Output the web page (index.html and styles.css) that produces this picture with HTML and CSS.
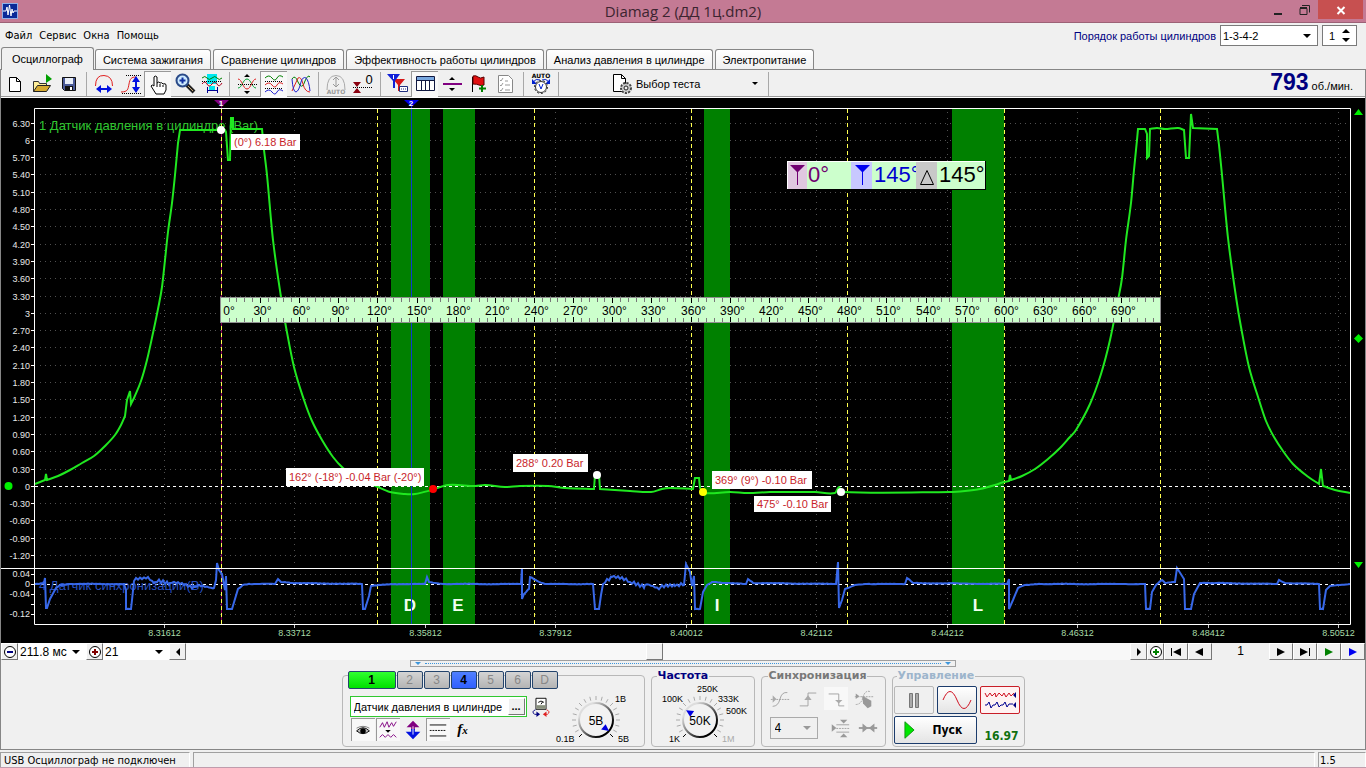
FILE: index.html
```html
<!DOCTYPE html>
<html lang="ru">
<head>
<meta charset="utf-8">
<title>Diamag 2 (ДД 1ц.dm2)</title>
<link rel="stylesheet" href="styles.css">
</head>
<body>
<header class="titlebar">
  <svg class="app-icon" viewBox="0 0 16 16"><rect width="16" height="16" fill="#8fb0e8"/><rect x="1" y="1" width="14" height="14" fill="#0a2a98"/><path d="M1 8h3l1-4 1 8 1.500-10 1.500 11 1-7 1 4 1-2h3" fill="none" stroke="#fff"/></svg>
  <h1 class="title">Diamag 2 (ДД 1ц.dm2)</h1>
  <div class="window-buttons">
    <button aria-label="Свернуть"><svg viewBox="0 0 12 12"><path d="M1 10h8" stroke="#222" stroke-width="2"/></svg></button>
    <button aria-label="Развернуть"><svg viewBox="0 0 12 12"><path d="M1 4.500h7v6h-7zM1 3.500h7M3 1.500h7.500v7" fill="none" stroke="#222"/></svg></button>
    <button class="close" aria-label="Закрыть"><svg viewBox="0 0 12 12"><path d="M2.500 3l7 7M9.500 3l-7 7" stroke="#fff" stroke-width="2"/></svg></button>
  </div>
</header>

<div class="topbar">
  <nav class="menu">
    <button>Файл</button><button>Сервис</button><button>Окна</button><button>Помощь</button>
  </nav>
  <div class="order">
    <label for="order">Порядок работы цилиндров</label>
    <span class="combo boxed order-combo"><select id="order"><option>1-3-4-2</option></select></span>
    <span class="spinner"><input type="text" value="1" aria-label="Цилиндр"><i class="up"></i><i class="down"></i></span>
  </div>
</div>

<nav class="tabs" role="tablist">
  <button role="tab" class="active" aria-selected="true">Осциллограф</button>
  <button role="tab">Система зажигания</button>
  <button role="tab">Сравнение цилиндров</button>
  <button role="tab">Эффективность работы цилиндров</button>
  <button role="tab">Анализ давления в цилиндре</button>
  <button role="tab">Электропитание</button>
</nav>

<main class="page">
<div class="toolbar">
  <button aria-label="Новый"><svg viewBox="0 0 24 24"><path d="M6.500 5.500h7l4 4v10h-11z" fill="#fff" stroke="#000"/><path d="M13.500 5.500v4h4" fill="none" stroke="#000"/></svg></button>
  <button aria-label="Открыть"><svg viewBox="0 0 24 24"><path d="M3.500 19.500v-10h5l1 2h7v3" fill="#ffef9a" stroke="#333"/><path d="M3.500 19.500l4-6h13l-4 6z" fill="#d6aa30" stroke="#222"/><path d="M16 2l6 5-6 4z" fill="#00a000"/></svg></button>
  <button aria-label="Сохранить"><svg viewBox="0 0 24 24"><path d="M5.500 5.500h13v13h-11l-2-2z" fill="#4a5a98" stroke="#111"/><path d="M8 6h8v6H8z" fill="#e8eef8"/><path d="M8 14h8v4H8z" fill="#111"/><path d="M13 15h2v3h-2z" fill="#fff"/></svg></button>
  <span class="sep"></span>
  <button aria-label="Период"><svg viewBox="0 0 24 24"><path d="M3.500 14q0-11 8.500-10.500t8.500 10.500" fill="none" stroke="#e02020"/><path d="M6 17h12" stroke="#0010e0" stroke-width="2"/><path d="M4 17l5-4v8zM20 17l-5-4v8z" fill="#0010e0"/></svg></button>
  <button aria-label="Амплитуда"><svg viewBox="0 0 24 24"><path d="M2 20c7 0 7-3 8-8s2-7 7-7" fill="none" stroke="#e02020"/><path d="M7 3.500h15M3 21.500h19" stroke="#000" stroke-dasharray="1 1"/><path d="M17 7v11" stroke="#0010e0" stroke-width="2"/><path d="M17 4l4 6h-8zM17 21l4-6h-8z" fill="#0010e0"/></svg></button>
  <button class="pressed" aria-label="Рука"><svg viewBox="0 0 24 24"><path d="M8 14V5q1-2 3 0v6q2-2 3 0 2-1 3 1 3-1 3 1v5l-2 4h-8l-5-8q1-2 3 0z" fill="#fff" stroke="#000"/><path d="M11 11v4M14 12v3M17 13v2" stroke="#000"/></svg></button>
  <button aria-label="Масштаб"><svg viewBox="0 0 24 24"><path d="M14 13l7 7" stroke="#222" stroke-width="4"/><path d="M15 14l5 5" stroke="#c8a878"/><circle cx="9.500" cy="8.500" r="6" fill="#cdeaff" stroke="#2a4a88" stroke-width="2"/><path d="M9.500 5.500v6M6.500 8.500h6" stroke="#1030a0" stroke-width="2"/></svg></button>
  <button aria-label="Фрагмент"><svg viewBox="0 0 24 24"><path d="M7 2h10v10H7zM9 14h6v4H9z" fill="#00e8f0"/><path d="M2 6q3-3 5 0t5 0 5 0 5 0" fill="none" stroke="#008000"/><path d="M2 12q3-4 5 0t5 0 5 0 5-1" fill="none" stroke="#b00020"/><path d="M2 9.500h20" stroke="#000" stroke-dasharray="1 1"/><path d="M7.500 15v6M17.500 15v6M8 18.500h9" stroke="#000090"/></svg></button>
  <span class="sep"></span>
  <button aria-label="Совместить"><svg viewBox="0 0 24 24"><path d="M3 16c4 0 5-9 9-9s5 9 9 9" fill="none" stroke="#00a030"/><path d="M3 7c4 0 5 10 9 10s5-10 9-10" fill="none" stroke="#e02020"/><path d="M3 12.500h19" stroke="#000" stroke-dasharray="1 1"/><path d="M9 5h6l-3-3zM9 19h6l-3 3z" fill="#000"/></svg></button>
  <button class="pressed" aria-label="Разнести"><svg viewBox="0 0 24 24"><path d="M3 6q4-4 7 0t5 0 6-1" fill="none" stroke="#008000"/><path d="M3 13q4-4 7 0t5 0 6-1" fill="none" stroke="#e02020"/><path d="M3 20q4-4 7 0t5 0 6-1" fill="none" stroke="#2020d0"/><path d="M3 9.500h18M3 16.500h18" stroke="#000" stroke-dasharray="1 1"/></svg></button>
  <button aria-label="Наложить"><svg viewBox="0 0 24 24"><path d="M3 7q3-5 6 3 4 9 7-1 3-7 5-4" fill="none" stroke="#008000"/><path d="M3 19L9 6q3-2 5 6t7 8" fill="none" stroke="#e02020"/><path d="M3 7q1 13 4 13 3-1 5-10 2-6 5-4 3 3 4 13" fill="none" stroke="#2020d0"/></svg></button>
  <span class="sep"></span>
  <button aria-label="Авто"><svg viewBox="0 0 24 24"><path d="M3 18Q3 3.500 12 3.500t9 14.500" fill="none" stroke="#aaa"/><path d="M12 5v10M9 8l3-3 3 3M9 12l3 3 3-3" fill="none" stroke="#999"/><text x="12" y="22" class="tiny dim">AUTO</text></svg></button>
  <button aria-label="Ноль"><svg viewBox="0 0 24 24"><path d="M2 10h8l-4 5zM2 21h8l-4-5z" fill="#8a0010"/><path d="M2 15.500h20" stroke="#000" stroke-dasharray="1 1"/><text x="18" y="12" class="zero">0</text></svg></button>
  <span class="sep"></span>
  <button aria-label="Курсоры"><svg viewBox="0 0 24 24"><path d="M7 7h12l-5 6v6h-2v-6z" fill="#d81818"/><path d="M1 2h13l-5 7v7H7V9z" fill="#1020d8"/><path d="M7.500 3v4" stroke="#fff"/><path d="M13.500 14.500h8v5h-8z" fill="#fff" stroke="#203080"/><path d="M15 17h5" stroke="#203080" stroke-dasharray="1 1"/></svg></button>
  <button class="pressed" aria-label="Таблица"><svg viewBox="0 0 24 24"><path d="M3.500 4.500h18v14h-18z" fill="#fff" stroke="#101840"/><path d="M4 5h17v3H4z" fill="#78a8e0"/><path d="M4 8.500h17M8.500 8v10M12.500 8v10M16.500 8v10" stroke="#101840"/></svg></button>
  <button aria-label="Делитель"><svg viewBox="0 0 24 24"><path d="M3 12h19" stroke="#800080" stroke-width="2"/><path d="M9 8h6l-3-3zM9 16h6l-3 3z" fill="#000"/></svg></button>
  <button aria-label="Метка"><svg viewBox="0 0 24 24"><path d="M5.500 5v15" stroke="#000"/><path d="M6 4q3-1 5 1t6 0v8q-3 1-5 0t-6-1z" fill="#e01010" stroke="#500"/><path d="M15 13v7M12 16.500h7" stroke="#008000" stroke-width="2"/></svg></button>
  <button aria-label="Список"><svg viewBox="0 0 24 24"><path d="M4.500 3.500h10l4 4v13h-14z" fill="#fff" stroke="#888"/><path d="M6 8l1 1 2-3M6 13l1 1 2-3M6 18l1 1 2-3M11 9h3M11 13h5M11 18h5" fill="none" stroke="#999"/></svg></button>
  <span class="sep"></span>
  <button aria-label="Автонастройка"><svg viewBox="0 0 24 24"><text x="12" y="6" class="tiny">AUTO</text><path d="M4 10q3-4 7-2M20 10q-3-4-7-2" fill="none" stroke="#0020d0"/><path d="M3 7v5h5zM21 7v5h-5z" fill="#0020d0"/><circle cx="12" cy="15" r="5.500" fill="#fff" stroke="#333"/><circle cx="12" cy="15" r="6.500" fill="none" stroke="#333" stroke-dasharray="2 2"/><path d="M10 12l2 5 2-5" fill="none" stroke="#0020d0"/></svg></button>
  <span class="sep"></span>
  <button class="test-choice"><svg viewBox="0 0 24 24"><path d="M3.500 2.500h8l4 4v13h-12z" fill="#fff" stroke="#000"/><path d="M11.500 2.500v4h4" fill="none" stroke="#000"/><circle cx="16" cy="16" r="4.500" fill="#ccc" stroke="#444" stroke-width="3" stroke-dasharray="2 1"/><circle cx="16" cy="16" r="4" fill="#ccc"/><circle cx="16" cy="16" r="2" fill="#eee" stroke="#222"/></svg><span>Выбор теста</span><i class="arrow"></i></button>
  <span class="sep"></span>
  <output class="rpm"><b>793</b> об./мин.</output>
</div>

<svg class="chart" id="chart" viewBox="1 98 1364 545" role="img" aria-label="Осциллограмма"></svg>

<div class="scrollbar-row">
  <button class="sq" aria-label="Уменьшить"><svg viewBox="0 0 16 16"><circle cx="8" cy="8" r="5.500" fill="#fff" stroke="#000"/><path d="M5 8h6" stroke="#000080" stroke-width="2"/></svg></button>
  <span class="combo span-combo"><select aria-label="Развёртка"><option>211.8 мс</option></select></span>
  <button class="sq" aria-label="Увеличить"><svg viewBox="0 0 16 16"><circle cx="8" cy="8" r="5.500" fill="#fff" stroke="#000"/><path d="M5 8h6M8 5v6" stroke="#800000" stroke-width="2"/></svg></button>
  <span class="combo scale-combo"><select aria-label="Масштаб"><option>21</option></select></span>
  <button class="sq" aria-label="Влево"><svg viewBox="0 0 16 16"><path d="M10 4v8L6 8z"/></svg></button>
  <input class="track" type="range" min="0" max="1000" value="496" aria-label="Прокрутка">
  <button class="sq" aria-label="Вправо"><svg viewBox="0 0 16 16"><path d="M6 4v8l4-4z"/></svg></button>
  <button class="sq" aria-label="Добавить"><svg viewBox="0 0 16 16"><circle cx="8" cy="8" r="5.500" fill="#fff" stroke="#000"/><path d="M5 8h6M8 5v6" stroke="#008000" stroke-width="2"/></svg></button>
  <button class="nav" aria-label="В начало"><svg viewBox="0 0 16 16"><path d="M3 4h1v8H3zM13 4v8L5 8z"/></svg></button>
  <button class="nav" aria-label="Назад"><svg viewBox="0 0 16 16"><path d="M11 4v8L3 8z"/></svg></button>
  <output class="frame-no">1</output>
  <button class="nav" aria-label="Вперёд"><svg viewBox="0 0 16 16"><path d="M4 4v8l8-4z"/></svg></button>
  <button class="nav" aria-label="В конец"><svg viewBox="0 0 16 16"><path d="M12 4h1v8h-1zM3 4v8l8-4z"/></svg></button>
  <button class="nav" aria-label="Воспроизвести"><svg viewBox="0 0 16 16"><path d="M4 4v8l8-4z" fill="#008000"/></svg></button>
  <button class="nav" aria-label="Быстро"><svg viewBox="0 0 16 16"><path d="M4 4v8l8-4z" fill="#0000f0"/></svg></button>
</div>

<div class="splitter"><i></i><span></span><i></i></div>

<div class="panel">
  <fieldset class="group channel">
    <div class="channel-main">
      <div class="channels">
        <button class="ch on1">1</button><button class="ch">2</button><button class="ch">3</button><button class="ch on4">4</button><button class="ch">5</button><button class="ch">6</button><button class="ch">D</button>
      </div>
      <div class="sensor-row">
        <span class="sensor"><input type="text" value="Датчик давления в цилиндре" aria-label="Датчик"><button aria-label="Выбрать">...</button></span>
        <button class="flat" aria-label="Перевернуть"><svg viewBox="0 0 24 24"><path d="M6.500 2.500h11v12h-11z" fill="#fff" stroke="#000"/><path d="M7 10h10v4H7z" fill="#88907c"/><path d="M9 7q3-3 6 0M12 9l2-3" fill="none" stroke="#000"/><path d="M6 15q-5 2-1 5h3" fill="none" stroke="#000080"/><path d="M7 17l4 3-4 3z" fill="#000080"/><path d="M18 15q5 2 1 5h-2" fill="none" stroke="#e02020"/><path d="M18 17v6l-4-3z" fill="#e02020"/></svg></button>
      </div>
      <div class="view-row">
        <button class="flat pressed" aria-label="Показать"><svg viewBox="0 0 24 24"><path d="M5 13q7-7 14 0-7 6-14 0z" fill="#bbb" stroke="#000"/><circle cx="12" cy="13" r="3" fill="#000"/><path d="M5 10q7-4 14 0" fill="none" stroke="#777"/></svg></button>
        <button class="flat pressed" aria-label="Фильтр"><svg viewBox="0 0 24 24"><path d="M3 9l3-5 2 5 3-6 2 6 3-5 2 4 3-5M3 20l3-3 3 3 3-3 3 3 3-3 3 3" fill="none" stroke="#800080"/><path d="M9 12h6l-3 3z"/></svg></button>
        <button class="flat" aria-label="Сдвиг"><svg viewBox="0 0 24 24"><path d="M12 2l7 7h-5v3h-4V9H5z" fill="#800080"/><path d="M12 22l8-8h-6v-3h-4v3H4z" fill="#0010e0"/><path d="M12 8v9" stroke="#fff"/></svg></button>
        <button class="flat pressed" aria-label="Уровни"><svg viewBox="0 0 24 24"><path d="M3 6.500h18M3 18.500h18" stroke="#000"/><path d="M3 12.500h18" stroke="#000" stroke-dasharray="2 1"/></svg></button>
        <button class="flat fx" aria-label="Функция"><i>f</i><small>x</small></button>
      </div>
    </div>
    <svg class="knob" id="volts" viewBox="555 688 85 56"></svg>
  </fieldset>

  <fieldset class="group freq">
    <legend>Частота</legend>
    <svg class="knob" id="freq" viewBox="654 684 96 60"></svg>
  </fieldset>

  <fieldset class="group sync">
    <legend>Синхронизация</legend>
    <div class="sync-row">
      <button class="flat" aria-label="По уровню"><svg viewBox="0 0 24 24"><path d="M4 20q6 0 8-8t8-7" class="gr"/><path d="M2 12.500h20" class="gr" stroke-dasharray="2 1"/><path d="M4 8v8l4-4z" fill="#aaa"/></svg></button>
      <button class="flat" aria-label="По фронту"><svg viewBox="0 0 24 24"><path d="M3 19.500h9v-14h9" class="gr"/><path d="M8 13l4-5 4 5z" fill="#aaa"/></svg></button>
      <button class="flat lit" aria-label="По спаду"><svg viewBox="0 0 24 24"><path d="M4 6.500h11v13h6" class="gr"/><path d="M11 13l4 4 4-4z" fill="#aaa"/></svg></button>
      <button class="flat" aria-label="Вручную"><svg viewBox="0 0 24 24"><path d="M3 6l4 3-4 3z" fill="#999"/><path d="M3 18q6 0 8-8t8-6M2 9.500h20" class="gr" stroke-dasharray="2 1"/><path d="M10 9l3 1 7 4v6l-4 2-5-5z" fill="#999"/></svg></button>
    </div>
    <div class="sync-row">
      <span class="combo boxed sync-combo"><select aria-label="Канал" disabled><option>4</option></select></span>
      <button class="flat" aria-label="Гистерезис"><svg viewBox="0 0 24 24"><path d="M3 8v8l5-4zM12 3h8l-4 4zM12 22h8l-4-4z" fill="#999"/><path d="M8 8.500h14M8 16.500h14" class="gr"/><path d="M8 12.500h14" class="gr" stroke-dasharray="2 1"/></svg></button>
      <button class="flat" aria-label="Сжать"><svg viewBox="0 0 24 24"><path d="M2 12h20" stroke="#999" stroke-width="2"/><path d="M6 7v10l6-5zM19 7v10l-6-5z" fill="#999"/></svg></button>
    </div>
  </fieldset>

  <fieldset class="group control">
    <legend>Управление</legend>
    <div class="control-row">
      <button class="big" aria-label="Пауза" disabled><svg viewBox="0 0 30 24"><path d="M10.500 5.500h3v14h-3zM16.500 5.500h3v14h-3z" fill="#aaa" stroke="#777"/></svg></button>
      <button class="big blue" aria-label="Одиночный"><svg viewBox="0 0 30 24"><path d="M1 12q7-17 14 0t14 0" fill="none" stroke="#d01020"/></svg></button>
      <button class="big red" aria-label="Самописец"><svg viewBox="0 0 34 24"><path d="M2 5l2 4 3-4 2 3 3-3 1 4 3-4 3 3 2-3 2 4 3-4 2 3 3-3" fill="none" stroke="#d01020"/><path d="M2 17h2l2-3 2 6 2-3h2l2-3 2 5 2-2h2l2-3 2 5 2-3h4" fill="none" stroke="#000090"/><path d="M33 4v6l-3-3zM33 14v6l-3-3z" fill="#000080"/></svg></button>
    </div>
    <div class="control-row">
      <button class="big blue start"><svg viewBox="0 0 12 20"><path d="M1 1v18l10-9z" fill="#00e800" stroke="#109010"/></svg><b>Пуск</b></button>
      <output class="version">16.97</output>
    </div>
  </fieldset>
</div>
</main>

<footer class="status"><span class="cell message">USB Осциллограф не подключен</span><span class="cell wide"></span><span class="cell num">1.5</span></footer>
<script src="chart.js"></script>
</body>
</html>
```
FILE: styles.css
```css
* { box-sizing: border-box; }
body {
  margin: 0; min-height: 100vh; display: flex; flex-direction: column;
  background: #f0f0f0; color: #000;
  font: 11px/14px "Liberation Sans", Arial, sans-serif;
}
button, input, select { font: inherit; color: inherit; margin: 0; padding: 0; border: 0; background: none; border-radius: 0; outline: 0; }
svg { display: block; }
i { font-style: normal; }

.titlebar { height: 23px; flex: none; background: #c47a94; border-bottom: 1px solid #9c6176; display: grid; grid-template-columns: 1fr auto 1fr; align-items: start; }
.app-icon { width: 16px; height: 16px; margin: 3px 2px; }
.title { margin: 0; font: 15px/23px "Open Sans", "Noto Sans", sans-serif; color: #3c2430; }
.window-buttons { display: flex; justify-content: flex-end; padding-right: 3px; }
.window-buttons button { width: 26px; height: 19px; display: grid; place-items: center; }
.window-buttons svg { width: 12px; height: 12px; }
.window-buttons .close { width: 45px; background: #c75050; }

.topbar { height: 24px; flex: none; display: flex; justify-content: space-between; padding: 1px 9px 0 5px; }
.menu { display: flex; gap: 7px; align-items: center; font-family: "DejaVu Sans Condensed", "DejaVu Sans", sans-serif; }
.order { display: flex; align-items: center; gap: 4px; color: #000080; }
.combo { position: relative; display: block; color: #000; }
.combo select { appearance: none; width: 100%; height: 100%; padding-left: 2px; opacity: 1; }
.combo::after { content: ""; position: absolute; right: 6px; top: 50%; margin-top: -2px; border: 4px solid transparent; border-top-color: #000; border-bottom: 0; pointer-events: none; }
.boxed { background: #fff; border: 1px solid #7a7a7a; }
.order-combo { width: 98px; height: 21px; }
.spinner { position: relative; width: 35px; height: 21px; border: 1px solid #7a7a7a; background: #fff; color: #000; }
.spinner input { width: 100%; height: 19px; padding-left: 6px; }
.spinner i { position: absolute; right: 6px; border: 4px solid transparent; }
.spinner .up { top: 3px; border-bottom-color: #000; border-top: 0; }
.spinner .down { bottom: 3px; border-top-color: #000; border-bottom: 0; }

.tabs { height: 22px; flex: none; display: flex; align-items: flex-end; gap: 2px; padding-left: 1px; }
.tabs button { height: 20px; padding: 0 7px; border: 1px solid #868686; border-bottom: 0; border-radius: 3px 3px 0 0; background: linear-gradient(#fff, #f0f0f0); }
.tabs .active { height: 23px; padding: 0 10px; margin: 0 -1px -1px 0; background: #f0f0f0; position: relative; }

.page { border: 1px solid #868686; border-top: 0; flex: 1; display: flex; flex-direction: column; }
.toolbar { height: 29px; flex: none; display: flex; align-items: center; border-top: 1px solid #868686; border-bottom: 1px solid #fff; box-shadow: inset 0 -1px #999; }
.toolbar button { width: 27px; height: 26px; flex: none; display: grid; place-items: center; }
.toolbar svg { width: 24px; height: 24px; flex: none; }
.pressed { background: #f8f8f8; box-shadow: inset 1px 1px #999; }
.sep { width: 8px; height: 24px; flex: none; background: linear-gradient(#a8a8a8, #a8a8a8) 4px 0 / 1px 100% no-repeat; }
.tiny { font: bold 6px "DejaVu Sans", sans-serif; text-anchor: middle; }
.dim { fill: #999; }
.zero { font: 13px "Liberation Sans", sans-serif; text-anchor: middle; }
.toolbar .test-choice { width: 202px; display: flex; align-items: center; gap: 2px; padding: 0 6px 0 48px; }
.arrow { margin-left: auto; border: 3px solid transparent; border-top-color: #000; border-bottom: 0; }
.rpm { margin-left: auto; padding-right: 12px; white-space: nowrap; line-height: 24px; }
.rpm b { font-size: 23px; color: #000080; }

.chart { width: 100%; height: auto; flex: none; background: #000; }
.chart text { font: 11px "Liberation Sans", Arial, sans-serif; }
.chart .axis { font-size: 9px; fill: #e8e8e8; }
.chart .time { font-size: 9px; fill: #a8dca8; text-anchor: middle; }
.chart .y { text-anchor: end; }
.chart .name { font-size: 13px; }
.chart .band { font-size: 17px; font-weight: bold; fill: #f0fff0; text-anchor: middle; }
.chart .note { fill: #c81e2a; }
.chart .deg { font-size: 12px; text-anchor: middle; }
.chart .mark { font-size: 8px; font-weight: bold; fill: #fff; text-anchor: middle; }
.chart .readout { font-size: 22px; }

.scrollbar-row { height: 17px; flex: none; display: flex; }
.scrollbar-row button { height: 17px; flex: none; border: 1px solid; border-color: #fff #777 #777 #fff; background: #f0f0f0; display: grid; place-items: center; }
.scrollbar-row svg { width: 16px; height: 16px; }
.sq { width: 17px; }
.nav { width: 24px; }
.scrollbar-row .combo { background: #fff; font-size: 12px; }
.span-combo { width: 68px; }
.scale-combo { width: 66px; }
.track { flex: 1; min-width: 0; height: 17px; appearance: none; background: #f8f8f8; }
.track::-webkit-slider-thumb { appearance: none; width: 17px; height: 17px; background: #f0f0f0; border: 1px solid; border-color: #fff #777 #777 #fff; }
.frame-no { width: 57px; text-align: center; line-height: 17px; font-size: 12px; }

.splitter { align-self: center; width: 40%; height: 7px; flex: none; padding: 0 4px; border: 1px solid #a0a0a0; display: flex; align-items: center; gap: 4px; }
.splitter i { border: 3px solid transparent; border-top-color: #3c96dc; border-bottom: 0; }
.splitter span { flex: 1; border-top: 1px dotted #3c96dc; }

.panel { display: flex; justify-content: center; gap: 6px; padding: 4px 0 2px; flex: 1; align-items: flex-start; }
.group { margin: 0; padding: 0; min-width: 0; border: 1px solid #b8b8b8; border-radius: 4px; height: 76px; }
.group legend { margin-left: 5px; padding: 0 1px; font: bold 11px/10px "DejaVu Sans", sans-serif; color: #000080; height: 10px; }
.channel { width: 303px; height: 72px; margin-top: 4px; display: flex; justify-content: space-between; padding: 0 4px 0 5px; }
.channel-main { width: 205px; }
.channels { display: flex; gap: 1px; margin-top: -5px; }
.ch { width: 26px; height: 18px; flex: none; border: 1px solid #24446c; border-radius: 2px; background: linear-gradient(#d4d4d4, #b4b4b4); color: #888; font-size: 12px; }
.on1 { width: 48px; background: linear-gradient(#30ff30, #00e000); color: #000; font-weight: bold; }
.on4 { background: linear-gradient(#5080ff, #3060ff); color: #000; font-weight: bold; }
.sensor-row { display: flex; gap: 2px; padding: 6px 0 0 2px; align-items: center; }
.sensor { display: flex; width: 177px; height: 21px; border: 1px solid #30c830; background: #fff; padding: 1px; }
.sensor input { flex: 1; min-width: 0; padding-left: 2px; }
.sensor button { width: 17px; border: 1px solid; border-color: #fff #777 #777 #fff; background: #f0f0f0; font-weight: bold; line-height: 9px; }
.flat { width: 24px; height: 23px; flex: none; display: grid; place-items: center; }
.flat svg { width: 22px; height: 22px; }
.view-row { display: flex; gap: 1px; padding-left: 3px; }
.fx { display: flex; align-items: center; justify-content: center; font: italic bold 15px "Liberation Serif", serif; }
.fx i { font-style: italic; }
.fx small { font-size: 11px; }
.channel .knob { width: 85px; height: 56px; flex: none; margin-top: 12px; }
.knob text { font: 9px "Liberation Sans", sans-serif; }
.knob .value { font-size: 12px; text-anchor: middle; }
.freq { width: 104px; }
.freq .knob { width: 96px; height: 60px; margin: 3px 0 0 2px; }
.sync { width: 125px; padding-left: 6px; }
.control { width: 133px; padding-left: 1px; }
.group.sync legend { color: #787878; margin-left: 0; }
.group.control legend { color: #9db5cc; margin-left: 3px; }
.sync-row { display: flex; gap: 4px; margin-top: 6px; align-items: center; }
.lit { background: #f8f8f8; }
.gr { fill: none; stroke: #a0a0a0; }
.sync-combo { width: 48px; height: 22px; margin: 0 6px 0 2px; background: #f0f0f0; border-color: #aaa; font-size: 12px; }
.sync-combo::after { border-top-color: #999; }
.sync-combo select { padding-left: 4px; color: #000; }
.control-row { display: flex; gap: 3px; margin-bottom: 2px; align-items: center; }
.group legend + .control-row { margin-top: 5px; }
.big { width: 40px; height: 28px; border: 1px solid #b8b8b8; border-radius: 2px; background: #f0f0f0; display: grid; place-items: center; }
.big svg { width: 30px; height: 24px; }
.big.blue { border-color: #1c3c6c; background: linear-gradient(#fff, #e4e4e4); }
.big.red { border-color: #c81e28; background: #fff2f2; }
.big.red svg { width: 34px; }
.big.start { width: 83px; display: flex; align-items: center; gap: 18px; padding-left: 9px; }
.big.start svg { width: 11px; height: 20px; }
.start b, .version { font: bold 12px "DejaVu Sans Condensed", "DejaVu Sans", sans-serif; }
.version { flex: 1; text-align: center; color: #107010; padding-top: 12px; }

.status { height: 19px; flex: none; display: flex; gap: 3px; border-bottom: 2px solid #c09cac; padding-top: 2px; font-family: "DejaVu Sans Condensed", "DejaVu Sans", sans-serif; }
.cell { border: 1px solid #a0a0a0; border-bottom: 0; border-right-color: #fff; line-height: 15px; padding-left: 3px; white-space: nowrap; }
.message { width: 190px; }
.wide { flex: 1; }
.num { width: 48px; padding-left: 1px; }
```
FILE: chart.js
```js
const NS = 'http://www.w3.org/2000/svg';
const chart = document.getElementById('chart');

function add(parent, tag, attrs, text) {
  const el = document.createElementNS(NS, tag);
  for (const k in attrs) el.setAttribute(k, attrs[k]);
  if (text !== undefined) el.textContent = text;
  parent.appendChild(el);
  return el;
}
const line = (x1, y1, x2, y2, stroke, dash) =>
  add(chart, 'path', { d: `M${x1} ${y1}L${x2} ${y2}`, stroke, fill: 'none', 'stroke-dasharray': dash || 'none' });
const rect = (x, y, width, height, fill) => add(chart, 'rect', { x, y, width, height, fill });
const label = (x, y, cls, text, fill) =>
  add(chart, 'text', fill ? { x, y, class: cls, fill } : { x, y, class: cls }, text);

/* grid and axes */
for (let k = 21; k >= -4; k--) {
  const y = Math.floor(486.3 - k * 17.3) + 0.5;
  if (k) line(40, y, 1350, y, '#505050', '1 4');
  line(31, y, 34, y, '#fff');
  const v = k * 0.3;
  label(30, y + 3, 'axis y', k % 10 === 0 ? String(Math.round(v)) : v.toFixed(2));
}
[['0.04', 574], ['0', 584], ['-0.04', 594], ['', 604], ['-0.12', 614]].forEach(([t, y]) => {
  if (t !== '0') line(40, y + 0.5, 1350, y + 0.5, '#505050', '1 4');
  line(31, y + 0.5, 34, y + 0.5, '#fff');
  label(30, y + 3, 'axis y', t);
});
for (let i = 0; i < 10; i++) {
  const x = Math.floor(164.3 + i * 130.5) + 0.5;
  line(x, 112, x, 624, '#505050', '1 5');
  line(x, 624, x, 628, '#ccc');
  label(x, 636, 'axis time', (8.31612 + i * 0.021).toFixed(5));
}

/* valve phases */
[[391, 39], [443, 32], [704, 26], [952, 52]].forEach(([x, w]) => rect(x, 109, w, 515, '#008000'));

line(221.5, 105, 221.5, 624, '#900060');
for (let i = 0; i < 7; i++) {
  const x = Math.floor(221.3 + i * 156.6) + 0.5;
  line(x, 109, x, 624, '#ffff50', '4 3');
}
line(35, 486.5, 1350, 486.5, '#fff', '3 3');
line(35, 584.5, 1350, 584.5, '#fff', '3 3');

label(39, 130, 'name', '1 Датчик давления в цилиндре (Bar)', '#30c830');
label(39, 590, 'name', '4 Датчик синхронизации(В)', '#2850c0');

const pressure = [35,484, 45,480, 46,474, 47,480, 58,476, 70,470, 82,463, 94,456, 105,446, 115,435, 121,425, 125,416,
  127,400, 130,391, 131,404, 134,398, 141,381, 147,360, 153,333, 158,309, 162,287, 165,260, 168,232, 172,203, 175,175,
  178,143, 180,130, 200,130, 225,130, 226,132, 228,160, 230,160, 231,117, 232,128, 233,117, 233,129, 262,129, 264,150, 267,175, 273,240,
  281,297, 286,327, 294,367, 304,400, 312,421, 322,440, 333,457, 343,468, 355,476, 363,480, 364,468, 365,481, 378,487,
  390,492, 405,494, 415,494, 432,490, 448,485, 475,486, 485,485, 505,487, 520,486, 548,486, 565,488, 594,489, 595,475,
  599,475, 600,489, 630,491, 651,492, 662,489, 670,488, 693,489, 695,478, 699,478, 700,488, 704,493, 730,492, 748,493,
  770,492, 790,492, 815,492, 835,493, 839,487, 842,492, 950,492, 965,491, 980,489, 995,485, 1004,482, 1009,481, 1010,475, 1011,480, 1022,476,
  1035,469, 1048,459, 1060,448, 1069,438, 1076,430, 1090,404, 1101,374, 1110,340, 1118,300, 1122,278, 1126,240, 1131,203, 1134,170, 1137,140,
  1138,129, 1145,129, 1147,134, 1147,158, 1149,156, 1150,129, 1157,128, 1165,129, 1178,128, 1184,130, 1186,158, 1189,158, 1191,114,
  1193,128, 1217,129, 1219,145, 1222,175, 1228,238, 1236,297, 1241,327, 1249,367, 1259,400, 1266,421, 1274,437, 1283,451, 1293,464,
  1307,476, 1319,484, 1321,469, 1323,486, 1335,490, 1350,493];

/* rounds the slow parts of the curve and keeps the short spikes sharp */
function smoothPath(p) {
  const n = p.length / 2;
  const at = i => [p[2 * i], p[2 * i + 1]];
  const slope = i => {
    if (i <= 0 || i >= n - 1) return null;
    const [ax, ay] = at(i - 1), [bx, by] = at(i), [cx, cy] = at(i + 1);
    return bx - ax < 3 || cx - bx < 3 ? null : (cy - ay) / (cx - ax);
  };
  let d = `M${p[0]} ${p[1]}`;
  for (let i = 1; i < n; i++) {
    const [ax, ay] = at(i - 1), [bx, by] = at(i);
    const own = bx === ax ? 0 : (by - ay) / (bx - ax);
    const t = (bx - ax) / 3;
    if (t < 1) { d += `L${bx} ${by}`; continue; }
    const s0 = slope(i - 1) ?? own, s1 = slope(i) ?? own;
    d += `C${(ax + t).toFixed(1)} ${(ay + t * s0).toFixed(1)} ${(bx - t).toFixed(1)} ${(by - t * s1).toFixed(1)} ${bx} ${by}`;
  }
  return d;
}
add(chart, 'path', { d: smoothPath(pressure), fill: 'none', stroke: '#20e820', 'stroke-width': 2 });

const sync = [35,584, 44,583, 45,578, 46,608, 47,608, 50,599, 56,588, 60,585, 70,584, 124,584, 126,590, 126,609, 131,609,
  132,600, 134,581, 148,577, 155,582, 170,583, 195,587, 214,588, 216,580, 217,563, 219,570, 222,574, 225,590, 226,576, 227,609, 232,609, 235,599,
  238,589, 243,585, 250,584, 275,584, 278,579, 281,582, 290,583, 362,584, 363,609, 365,609, 369,596, 371,586, 391,584,
  425,584, 427,577, 429,582, 435,583, 445,584, 521,584, 522,568, 522,599, 524,594, 529,589, 530,577, 537,581, 545,584,
  593,584, 595,609, 599,609, 601,595, 603,584, 612,577, 630,582, 645,585, 660,588, 675,586, 684,585, 686,564, 690,572,
  692,586, 694,576, 695,609, 700,609, 703,592, 707,585, 712,582, 725,583, 746,584, 748,579, 753,583, 836,584, 838,562,
  839,608, 842,600, 845,589, 855,585, 870,584, 905,584, 907,578, 913,583, 1007,584, 1009,579, 1009,609, 1013,600, 1018,588, 1025,585,
  1040,584, 1145,584, 1146,609, 1150,609, 1152,592, 1156,585, 1162,580, 1165,583, 1175,582, 1177,568, 1184,579, 1185,609, 1191,609,
  1194,594, 1200,583, 1217,583, 1277,584, 1279,580, 1285,583, 1319,584, 1320,609, 1323,609, 1326,590, 1330,586, 1350,584];
const trace = [];
for (let i = 0; i < sync.length; i += 2) {
  const [x, y, nx, ny] = [sync[i], sync[i + 1], sync[i + 2], sync[i + 3]];
  trace.push(`${x},${y}`);
  const noisy = (x >= 134 && x < 214) || (x >= 603 && x < 684);
  for (let s = x + 2; s < nx && Math.abs(ny - y) < 8; s += 2) {
    const amp = noisy ? 3 : 0.4;
    trace.push(`${s},${(y + (ny - y) * (s - x) / (nx - x) + amp * Math.sin(s * 2.3) * Math.sin(s * 0.7)).toFixed(1)}`);
  }
}
add(chart, 'polyline', { points: trace.join(' '), fill: 'none', stroke: '#3868e8', 'stroke-width': 2 });

[['D', 410], ['E', 458], ['I', 717], ['L', 978]].forEach(([t, x]) => label(x, 611, 'band', t));
line(411.5, 105, 411.5, 624, '#1038d0');

/* frame */
line(0, 568.5, 1350, 568.5, '#fff');
add(chart, 'path', { d: 'M34.500 108.500H1350.500V624.500H34.500Z', fill: 'none', stroke: '#fff' });
add(chart, 'path', { d: 'M214 100h15l-7.500 7z', fill: '#800080' });
add(chart, 'path', { d: 'M404 100h15l-7.500 7z', fill: '#0000e8' });
label(221, 106, 'mark', '1');
label(411, 106, 'mark', '2');
add(chart, 'path', { d: 'M1354 115h9l-4.500-6zM1354 562h9l-4.500 6zM1354 338.500l4.500-4.500 4.500 4.500-4.500 4.500z', fill: '#00f000' });
add(chart, 'circle', { cx: 8.5, cy: 486, r: 4, fill: '#00f000' });

/* degree ruler */
rect(220, 297, 941, 26, '#909090');
rect(221, 298, 939, 24, '#ccffcc');
for (let d = 0; d < 720; d += 6) {
  const x = Math.floor(221.3 + d * 1.305) + 0.5;
  const major = d % 30 === 0;
  const h = major ? 5 : 4;
  if (d) {
    line(x, 298, x, 298 + h, major ? '#000' : '#777');
    line(x, 322, x, 322 - h, major ? '#000' : '#777');
  }
  if (major) label(d ? x + 2 : 229, 315, 'deg', d + '°');
}

/* cursor readout */
rect(787, 161, 199, 29, '#000');
rect(787, 161, 198, 28, '#fff');
rect(788, 162, 197, 27, '#ccffcc');
rect(788, 162, 19, 27, '#e0c8e0');
rect(851, 162, 21, 27, '#c8c8ff');
label(808, 182, 'readout', '0°', '#700070');
label(874, 182, 'readout', '145°', '#0000d0');
rect(916, 162, 21, 27, '#c8c8c8');
label(939, 182, 'readout', '145°', '#000');
add(chart, 'path', { d: 'M790 165h15l-7 7v13h-1v-13z', fill: '#700070' });
add(chart, 'path', { d: 'M855 165h15l-7 7v13h-1v-13z', fill: '#0000f0' });
add(chart, 'path', { d: 'M920.500 184.500h13l-6.500-14z', fill: 'none', stroke: '#000' });

/* measured points */
[[231, 134, 69, 16, '(0°) 6.18 Bar'], [286, 468, 138, 18, '162° (-18°) -0.04 Bar (-20°)'], [513, 454, 75, 18, '288° 0.20 Bar'],
 [712, 471, 100, 18, '369° (9°) -0.10 Bar'], [754, 496, 77, 16, '475° -0.10 Bar']].forEach(([x, y, w, h, t]) => {
  rect(x, y, w, h, '#fff');
  label(x + 3, y + h / 2 + 4, 'note', t);
});
[[221, 130, '#fff'], [433, 489, '#f00'], [597, 475, '#fff'], [703, 492, '#ff0'], [841, 492, '#fff']].forEach(([cx, cy, fill]) =>
  add(chart, 'circle', { cx, cy, r: 4, fill }));

/* rotary knobs */
function knob(id, cx, cy, value, labels, pointer) {
  const svg = document.getElementById(id);
  const g = add(svg, 'linearGradient', { id: id + '-ring', x1: 0, y1: 0, x2: 1, y2: 1 });
  add(g, 'stop', { offset: 0.2, 'stop-color': '#ddd' });
  add(g, 'stop', { offset: 0.8, 'stop-color': '#000' });
  for (let i = 0; i <= 18; i++) {
    const a = (135 + i * 15) * Math.PI / 180;
    const p = r => `${(cx + r * Math.cos(a)).toFixed(1)} ${(cy + r * Math.sin(a)).toFixed(1)}`;
    add(svg, 'path', { d: `M${p(20)}L${p(24)}`, stroke: i % 18 === 0 ? '#000' : '#aaa' });
  }
  add(svg, 'circle', { cx, cy, r: 17, fill: '#f2f2f2', stroke: `url(#${id}-ring)`, 'stroke-width': 2 });
  const pa = pointer * Math.PI / 180;
  add(svg, 'path', { d: 'M-3 -3L4 0L-3 4Z', fill: '#0000e0', transform: `translate(${(cx + 13 * Math.cos(pa)).toFixed(1)} ${(cy + 13 * Math.sin(pa)).toFixed(1)}) rotate(${pointer})` });
  add(svg, 'text', { x: cx, y: cy + 5, class: 'value' }, value);
  labels.forEach(([t, x, y, fill]) => add(svg, 'text', { x, y, fill: fill || '#000' }, t));
}
knob('volts', 596, 720, '5В', [['0.1В', 556, 742], ['1В', 615, 702], ['5В', 618, 742]], 40);
knob('freq', 700, 720, '50K', [['100K', 662, 702], ['250K', 697, 692], ['333K', 718, 702], ['500K', 726, 714], ['1K', 669, 742], ['1M', 722, 742, '#aaa']], 215);
```
